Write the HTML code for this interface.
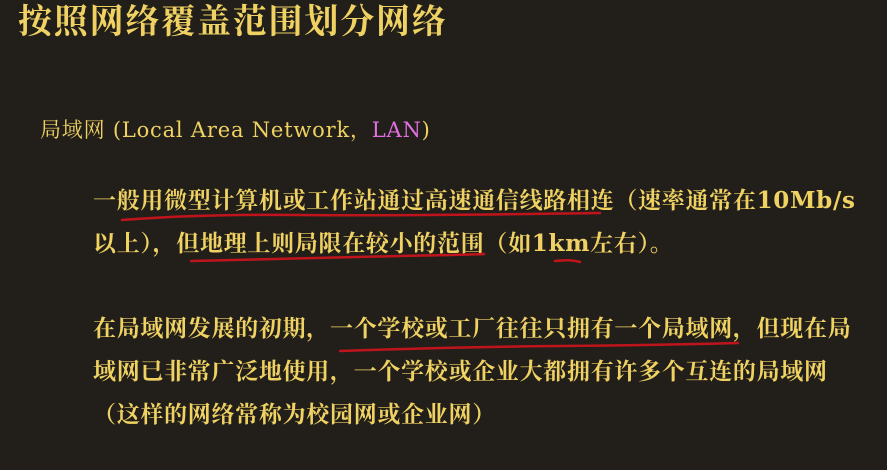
<!DOCTYPE html>
<html><head><meta charset="utf-8"><style>
body{margin:0;width:887px;height:470px;background:#221f1b;overflow:hidden;position:relative;font-family:"DejaVu Serif","Noto Serif CJK SC",serif;color:#efd262}
.l{position:absolute;white-space:nowrap;line-height:1;font-weight:bold}
.t{font-size:34px;left:18px;top:5px;letter-spacing:1.8px}
.s{font-size:21px;left:40px;top:120px;font-weight:normal;letter-spacing:0.8px}
.b{font-size:23px;left:93px;letter-spacing:0.7px}
.m{color:#e070e0}
</style></head><body>
<div class="l t">按照网络覆盖范围划分网络</div>
<div class="l s">局域网 (Local Area Network，<span class="m">LAN</span>)</div>
<div class="l b" style="top:189px">一般用微型计算机或工作站通过高速通信线路相连（速率通常在10Mb/s</div>
<div class="l b" style="top:232px">以上），但地理上则局限在较小的范围（如1km左右）。</div>
<div class="l b" style="top:317px">在局域网发展的初期，一个学校或工厂往往只拥有一个局域网，但现在局</div>
<div class="l b" style="top:360px">域网已非常广泛地使用，一个学校或企业大都拥有许多个互连的局域网</div>
<div class="l b" style="top:403px">（这样的网络常称为校园网或企业网）</div>
<svg width="887" height="470" style="position:absolute;left:0;top:0">
<g fill="none" stroke="#c0141c" stroke-width="2.5" stroke-linecap="round">
<path d="M122 220 Q200 214 300 215 T600 213"/>
<path d="M191 261 Q300 258 400 256 T481 254"/>
<path d="M555 261 Q570 259 580 262"/>
<path d="M340 351 Q450 347 560 346 T738 343"/>
</g></svg>
</body></html>
